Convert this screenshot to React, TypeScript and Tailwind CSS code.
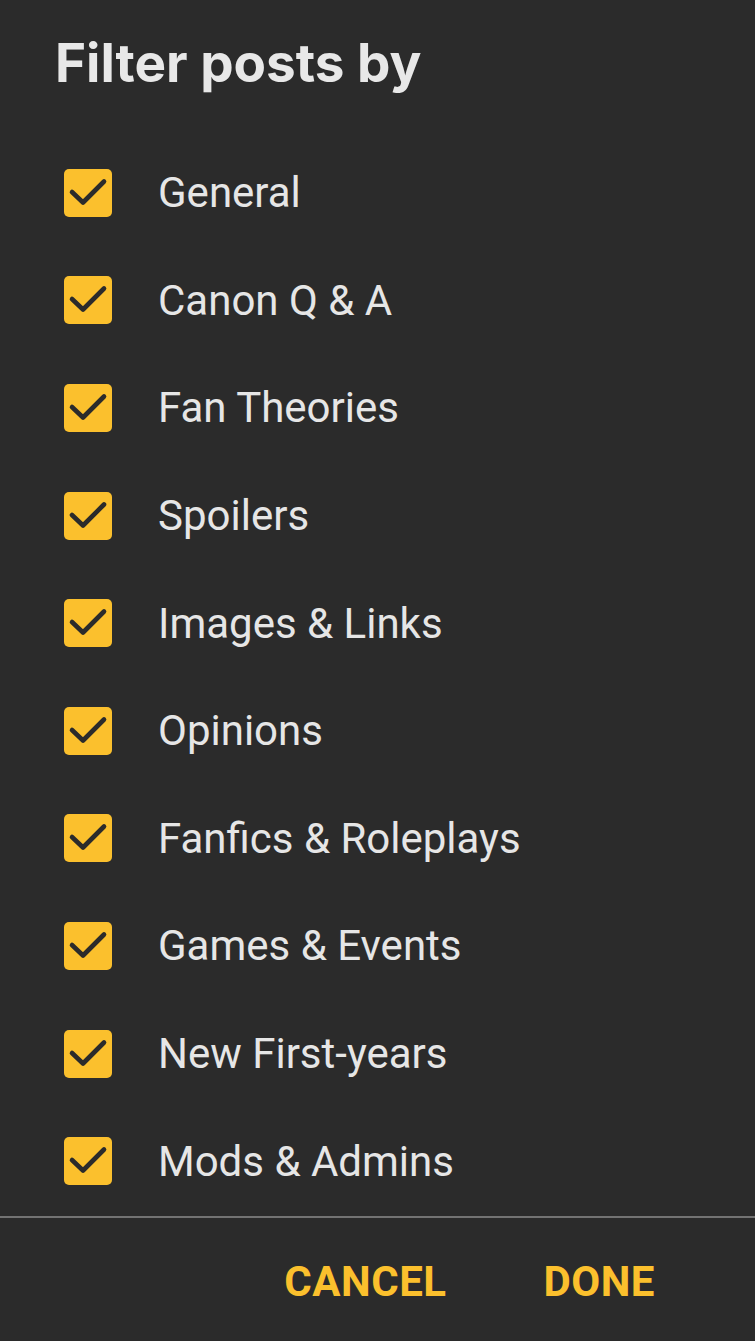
import React from "react";

const categories = [
  "General",
  "Canon Q & A",
  "Fan Theories",
  "Spoilers",
  "Images & Links",
  "Opinions",
  "Fanfics & Roleplays",
  "Games & Events",
  "New First-years",
  "Mods & Admins",
];

const CheckBox = () => (
  <div className="w-[48px] h-[48px] rounded-[5px] bg-[#fbc02d] shrink-0">
    <svg width="48" height="48" viewBox="0 0 48 48" fill="none">
      <path
        d="M8 23l11 10.5L40 12.5"
        stroke="#2b2b2b"
        strokeWidth="4.6"
        strokeLinecap="round"
        strokeLinejoin="round"
      />
    </svg>
  </div>
);

const App = () => {
  return (
    <div
      className="w-[755px] h-[1341px] bg-[#2b2b2b] flex flex-col overflow-hidden"
      style={{ fontFamily: "Roboto, 'Noto Sans', sans-serif" }}
    >
      <div className="pt-[33px] pl-[55px]">
        <h1
          className="text-[53px] leading-[60px] font-bold text-[#e8e8e8]"
          style={{ fontFamily: "Inter, Roboto, sans-serif" }}
        >
          Filter posts by
        </h1>
      </div>
      <div className="flex flex-col mt-[46px] pl-[64px]">
        {categories.map((c) => (
          <div key={c} className="h-[107.6px] flex items-center gap-[46px]">
            <CheckBox />
            <span className="text-[42px] text-[#e6e6e6]">{c}</span>
          </div>
        ))}
      </div>
      <div className="h-[2px] bg-[#737373] mt-[1px]" />
      <div className="flex-1 flex items-center justify-end pr-[100px] gap-[97px] pt-[4px]">
        <button className="text-[42px] font-bold text-[#fbc02d] tracking-[0.5px]">
          CANCEL
        </button>
        <button className="text-[42px] font-bold text-[#fbc02d] tracking-[0.5px]">
          DONE
        </button>
      </div>
    </div>
  );
};

export default App;
